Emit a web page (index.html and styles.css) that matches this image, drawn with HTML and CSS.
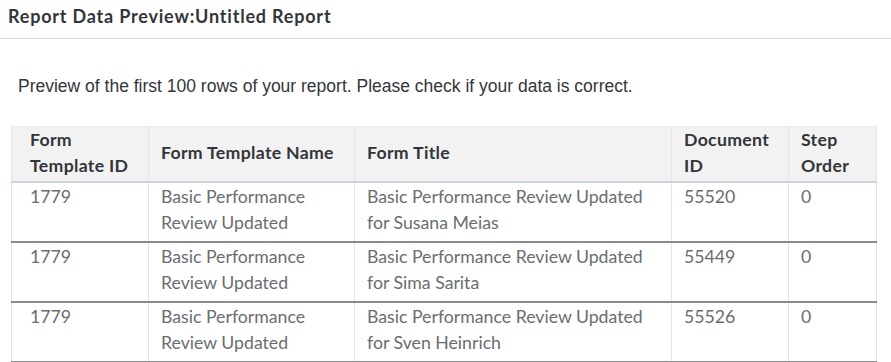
FILE: index.html
```html
<!DOCTYPE html>
<html>
<head>
<meta charset="utf-8">
<link rel="stylesheet" href="styles.css">
</head>
<body>
<div class="titlebar">Report Data Preview:Untitled Report</div>
<div class="content">
  <p class="intro">Preview of the first 100 rows of your report. Please check if your data is correct.</p>
  <table class="grid">
    <colgroup>
      <col class="c1"><col class="c2"><col class="c3"><col class="c4"><col class="c5">
    </colgroup>
    <thead>
      <tr>
        <th class="first">Form<br>Template ID</th>
        <th>Form Template Name</th>
        <th>Form Title</th>
        <th>Document<br>ID</th>
        <th>Step<br>Order</th>
      </tr>
    </thead>
    <tbody>
      <tr>
        <td class="first">1779</td>
        <td>Basic Performance Review Updated</td>
        <td>Basic Performance Review Updated for Susana Meias</td>
        <td>55520</td>
        <td>0</td>
      </tr>
      <tr>
        <td class="first">1779</td>
        <td>Basic Performance Review Updated</td>
        <td>Basic Performance Review Updated for Sima Sarita</td>
        <td>55449</td>
        <td>0</td>
      </tr>
      <tr>
        <td class="first">1779</td>
        <td>Basic Performance Review Updated</td>
        <td>Basic Performance Review Updated for Sven Heinrich</td>
        <td>55526</td>
        <td>0</td>
      </tr>
    </tbody>
  </table>
</div>
</body>
</html>
```
FILE: styles.css
```css
html, body {
  margin: 0;
  padding: 0;
  background: #ffffff;
}
.titlebar {
  font-family: Lato, "Open Sans", sans-serif;
  font-weight: 700;
  font-size: 18px;
  letter-spacing: 0.8px;
  color: #32363a;
  height: 38px;
  line-height: 32px;
  padding-left: 8px;
  border-bottom: 1px solid #d9d9d9;
}
.content {
  padding: 0 15px 0 11px;
}
.intro {
  font-family: "Liberation Sans", Arial, sans-serif;
  font-size: 17.5px;
  color: #32363a;
  margin: 0;
  padding: 37px 0 0 7px;
  line-height: 20px;
  height: 50px;
}
.grid {
  border-collapse: collapse;
  table-layout: fixed;
  width: 865px;
  font-family: Lato, "Open Sans", sans-serif;
  font-size: 17.7px;
}
.c1 { width: 137px; }
.c2 { width: 206px; }
.c3 { width: 317px; }
.c4 { width: 117px; }
.c5 { width: 88px; }
.grid th {
  background: #f2f2f2;
  color: #32363a;
  font-weight: 700;
  letter-spacing: 0.3px;
  text-align: left;
  vertical-align: middle;
  line-height: 26px;
  padding: 0 6px 2px 12px;
  border-left: 1px solid #e5e5e5;
  border-right: 1px solid #e5e5e5;
  border-top: 1px solid #ececec;
  border-bottom: 2px solid #ccd3da;
}
.grid td {
  color: #6a6d70;
  vertical-align: top;
  line-height: 26px;
  padding: 1px 6px 5px 12px;
  border-left: 1px solid #e5e5e5;
  border-right: 1px solid #e5e5e5;
  border-bottom: 2px solid #8c8c8c;
}
.grid .first {
  padding-left: 18px;
}
```
